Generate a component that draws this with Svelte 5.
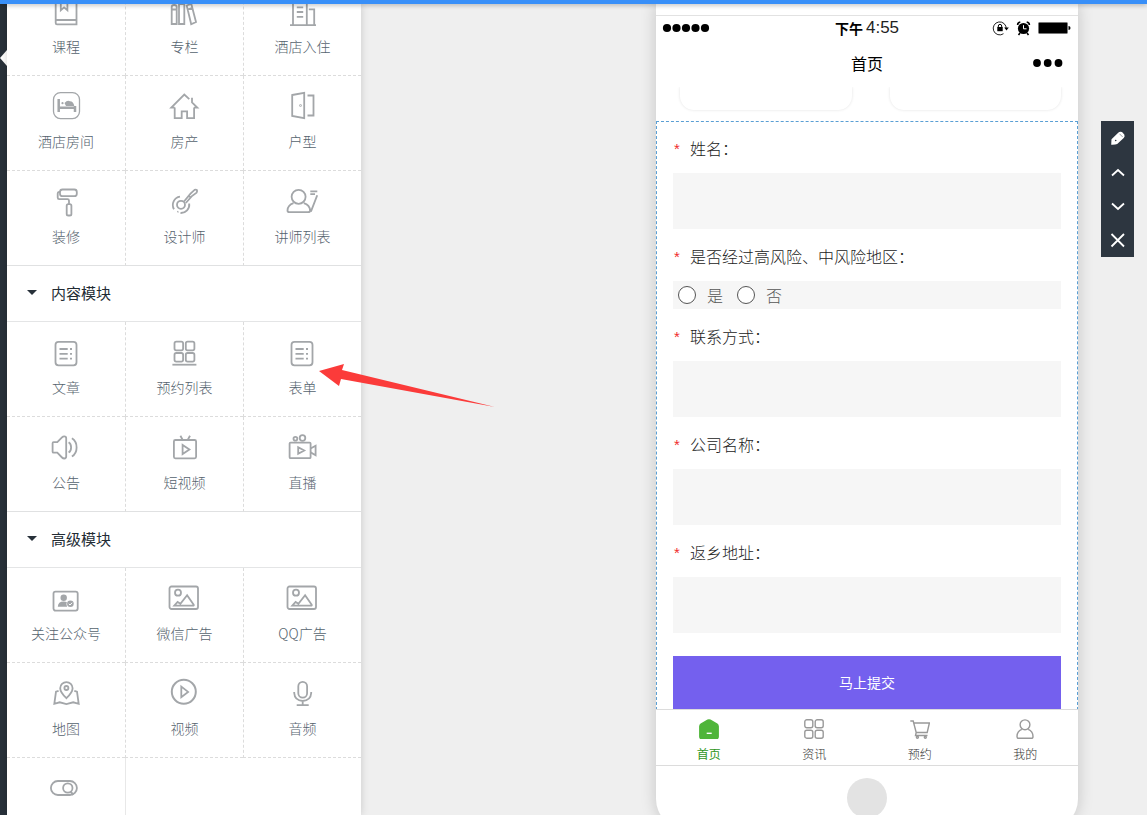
<script>
  const picture = '<rect x="1.5" y="4.5" width="28.5" height="22.5" rx="2"/><circle cx="10" cy="10.7" r="3"/><path d="M6.3 23.7 9.6 20l2.8 1.8 6.7-8.6 6.6 9.6q.5.9-.8.9z"/>';
  const sheet = '<rect x="5.5" y="5.8" width="21" height="23.5" rx="3"/><path d="M9.5 13h8.2M9.5 17.8h8.2M9.5 22.6h8.2M20 13h2M20 17.8h2M20 22.6h2"/>';

  const icons = {
    course: '<path d="M5.7 4h20.8v25.4H7q-1.3 0-1.3-1.3zM5.7 25h20.8M10.8 4v11.2l3.3-2.8 3.3 2.8V4"/>',
    books: '<path d="M3.7 12q0-2 2.5-2t2.5 2v17h-5zM3.7 14.5h5M11 5h5.3v24H11zM11 9h5.3M18.7 10.5l4.6-1.6L28 27.1l-4.8 2.1zM19.6 14.6l4.8-1.7"/>',
    hotel: '<path d="M4 30.2h26M7 30V4h13.8v26M22.8 14.3h5.4V30M10.8 12.4h6.4M10.8 17h6.4M10.8 21.8h6.4"/>',
    bed: '<rect x="3.5" y="2.6" width="26" height="26" rx="7" stroke-width="1.3"/><path d="M8.7 9v13M9 17.8h16M25 16v6" stroke-width="2.5"/><circle cx="12.5" cy="13.2" r="1.1" fill="currentColor" stroke="none"/><path d="M14.5 13q3-3.4 5.5-1.7 3.4.2 4.3 4.7H16z" fill="currentColor" stroke="none"/>',
    house: '<path d="M6.7 17.6H3.3L16.3 4.6l5 4.6M26 17.6h3.3L24 12.4V7.8M6.7 17.6v10.6h7v-6.8h5.4v6.8h7V17.6"/>',
    door: '<path d="m6.2 5 12-2.2v25.4L6.2 26zM21.5 5.5h6v20h-6"/><circle cx="14.5" cy="15.5" r=".4"/>',
    roller: '<rect x="10" y="4.5" width="16.8" height="6.7" rx="2.5"/><path d="M10 7H9q-1.3 0-1.3 1.6v4q0 1.6 1.5 1.6h8.3q1.5 0 1.5 1.5V19"/><rect x="16.7" y="19.2" width="4.7" height="11.3" rx="1.6"/>',
    designer: '<circle cx="13" cy="19.8" r="4"/><path d="M12 11.7a8.4 8.4 0 0 0-6 12.6M9.4 27l1-.5M21.2 18.5A8.4 8.4 0 0 1 12.5 28M16 16.5l6.5-7.8 4-3.8q1.5-.6 2.5.2.3 1.4-.4 2.5l-5 3.7-5.8 6.7M20.7 10.8l2.2 2"/>',
    teacher: '<circle cx="12.6" cy="11.8" r="7"/><path d="M7.5 18.2q-5.8 2-6 7.3 0 1.7 2 1.7h18.6q2 0 2-1.7-.3-5.3-6.3-7.3M24.3 6.3h7M24.3 9.1h4.7M31.2 10.3l-6.3 16.3"/>',
    sheet,
    appointment: '<rect x="6.5" y="5.7" width="8.6" height="8.6" rx="1.8"/><rect x="17.8" y="5.7" width="8.6" height="8.6" rx="1.8"/><rect x="6.5" y="17" width="8.6" height="8.6" rx="1.8"/><rect x="17.8" y="17" width="8.6" height="8.6" rx="1.8"/><path d="M4.4 28.7h24"/>',
    notice: '<path d="M2.6 12.2q0-1 1-1h3.7L12 6.4q1-1 2.3-1 1.9 0 1.9 1.9v18.3q0 1.9-1.9 1.9-1.3 0-2.3-1l-4.7-4.8H3.6q-1 0-1-1zM18.6 11.2q2.5 1.5 2.5 5.2t-2.5 5.2M21.9 7.3q4.7 3 4.7 9.1t-4.7 9.1"/>',
    tv: '<rect x="5.9" y="9" width="22.2" height="18.3" rx="1.5"/><path d="m12.4 4.8 2.2 4M22 4.8l-2.2 4M14.6 14v9l6.8-4.5z"/>',
    camera: '<rect x="3.6" y="11.6" width="21" height="15.6" rx="1"/><circle cx="9.4" cy="7.8" r="1.9"/><circle cx="16.5" cy="7" r="2.8"/><path d="M12.2 16.3v6.4l6-3.2zM24.6 17.5l5-2.8v9.5l-5-2.8"/>',
    follow: '<rect x="3.5" y="9.6" width="24.2" height="19" rx="2"/><g fill="currentColor" stroke="none"><circle cx="13.7" cy="15.8" r="3.2"/><path d="M7.8 24.8q.2-5.2 5.9-5.2 2 0 3.2.6-1.4 2.2.2 4.6z"/><circle cx="20.4" cy="21.8" r="3.3"/></g><path d="m18.8 21.8 1.2 1.2 2.1-2.2" stroke="#fff" stroke-width="1"/>',
    picture,
    map: '<path d="M16.4 21.2q-6.2-6-6.2-10a6.2 6 0 0 1 12.4 0q0 4-6.2 10zM8.6 13.8l-2.6.8-1.7 12.2 5.4-1.5 6.7 1.8 6.8-1.8 5.5 1.5L27 14.6l-2.7-.8"/><circle cx="16.4" cy="11" r="2"/>',
    video: '<circle cx="15.8" cy="14.7" r="12" stroke-width="2"/><path d="M13.3 9.6v10.6l6.8-5.3z"/>',
    mic: '<rect x="12.3" y="4.8" width="8.8" height="15.8" rx="4.4"/><path d="M8.2 15v1q.5 7.6 8.5 8 8-.4 8.5-8v-1M16.7 24v4M10.7 28.2h12"/>',
    search: '<rect x=".9" y="9" width="26" height="14" rx="7"/><circle cx="17.8" cy="16" r="4.7"/><path d="m20.7 19.6 2.6 3.2" stroke-width="2"/>',
    home: '<path d="M8.8 1.2 2 5.2Q.8 6 .8 7.4v10q0 2.6 2.6 2.6h13.2q2.6 0 2.6-2.6v-10q0-1.4-1.2-2.2l-6.8-4q-1.2-.7-2.4 0z" fill="currentColor"/><path d="M7.7 14.3h5" stroke="#fff"/>',
    grid: '<rect x=".8" y=".8" width="8" height="8" rx="2"/><rect x="11.2" y=".8" width="8" height="8" rx="2"/><rect x=".8" y="11.2" width="8" height="8" rx="2"/><rect x="11.2" y="11.2" width="8" height="8" rx="2"/>',
    cart: '<path d="M.3 2h2.9l3 11.5h11L19.4 4H3.8M6.2 13.5l-.7 3h12"/><circle cx="7.4" cy="18.3" r="1"/><circle cx="15.3" cy="18.3" r="1"/>',
    user: '<circle cx="10" cy="5.8" r="4.9"/><path d="M6.8 10.3Q2 12.3 2 17.4q0 1.9 1.8 1.9h12.4q1.8 0 1.8-1.9 0-5.1-4.8-7.1"/>',
  };

  const sections = [
    {
      items: [
        ['course', '课程'], ['books', '专栏'], ['hotel', '酒店入住'],
        ['bed', '酒店房间'], ['house', '房产'], ['door', '户型'],
        ['roller', '装修'], ['designer', '设计师'], ['teacher', '讲师列表'],
      ],
    },
    {
      title: '内容模块',
      items: [
        ['sheet', '文章'], ['appointment', '预约列表'], ['sheet', '表单'],
        ['notice', '公告'], ['tv', '短视频'], ['camera', '直播'],
      ],
    },
    {
      title: '高级模块',
      items: [
        ['follow', '关注公众号'], ['picture', '微信广告'], ['picture', 'QQ广告'],
        ['map', '地图'], ['video', '视频'], ['mic', '音频'],
        ['search', ''],
      ],
    },
  ];

  const fields = [
    { id: 'name', label: '姓名' },
    { id: 'risk', label: '是否经过高风险、中风险地区', options: ['是', '否'] },
    { id: 'contact', label: '联系方式' },
    { id: 'company', label: '公司名称' },
    { id: 'address', label: '返乡地址' },
  ];

  const tabs = [['home', '首页'], ['grid', '资讯'], ['cart', '预约'], ['user', '我的']];

  const tools = [
    { name: 'edit' },
    { name: 'up', d: 'M2 11.5 8 6l6 5.5' },
    { name: 'down', d: 'M2 5.5 8 11l6-5.5' },
    { name: 'remove', d: 'm1.500 2 12.500 12.500M14 2 1.500 14.500' },
  ];

  let active = $state('首页');
</script>

<div class="editor">
  <div class="topbar"></div>

  <div class="main">
    <div class="rail"><span class="rail-mark"></span></div>

    <aside class="panel">
      <div class="scrolled">
        {#each sections as section}
          <section>
            {#if section.title}
              <h2><span class="caret"></span>{section.title}</h2>
            {/if}
            <div class="modules">
              {#each section.items as [icon, label]}
                <button class="module" type="button" aria-label={label || icon}>
                  <svg width="32" height="32" viewBox="0 0 32 32">{@html icons[icon]}</svg>
                  {#if label}<span>{label}</span>{/if}
                </button>
              {/each}
            </div>
          </section>
        {/each}
      </div>
    </aside>

    <main class="canvas">
      <div class="phone">
        <div class="status">
          <svg class="signal" width="48" height="10" viewBox="0 0 48 10">
            {#each [0, 1, 2, 3, 4] as i}
              <circle cx={5 + i * 9.5} cy="5" r="4.1" />
            {/each}
          </svg>
          <div class="time"><b>下午</b><span>4:55</span></div>
          <svg class="indicators" width="80" height="16" viewBox="0 0 80 16">
            <path d="M11.5 13.7A6.5 6.5 0 1 1 14.2 9" fill="none" stroke="#222" />
            <path d="M12.2 7.6h4.6l-2.3 3z" />
            <rect x="5.3" y="7" width="5.4" height="4.2" />
            <path d="M6.3 7.5V6q0-1.6 1.7-1.6T9.7 6v1.5" fill="none" stroke="#000" />
            <circle cx="31.5" cy="8.5" r="5.6" />
            <path d="M25.6 5q0-2.5 2.7-3M37.4 5q0-2.5-2.7-3M28 13l-1.5 2M35 13l1.5 2" fill="none" stroke="#000" stroke-width="1.6" />
            <path d="M31.5 5.2v3.6h3" fill="none" stroke="#fff" />
            <rect x="46.5" y="2.5" width="29" height="11" rx="1" stroke="#777" />
            <path d="M76.5 6q2 0 2 2t-2 2z" />
          </svg>
        </div>
        <div class="navbar">
          <span class="title">首页</span>
          <button class="more" type="button" aria-label="more">
            <svg width="32" height="10" viewBox="0 0 32 10">
              <circle cx="5" cy="5" r="3.9" /><circle cx="15.7" cy="5" r="3.9" /><circle cx="26.5" cy="5" r="3.9" />
            </svg>
          </button>
        </div>

        <div class="screen">
          <div class="cards"><div class="card"></div><div class="card"></div></div>
          <form class="form" onsubmit={(e) => e.preventDefault()}>
            {#each fields as field}
              {#if field.options}
                <fieldset>
                  <legend class="label"><i>*</i>{field.label}：</legend>
                  <div class="options">
                    {#each field.options as option}
                      <label><input type="radio" name={field.id} value={option} />{option}</label>
                    {/each}
                  </div>
                </fieldset>
              {:else}
                <label class="label" for={field.id}><i>*</i>{field.label}：</label>
                <input class="text" id={field.id} type="text" />
              {/if}
            {/each}
            <button class="submit" type="submit">马上提交</button>
          </form>
        </div>

        <nav class="tabs">
          {#each tabs as [icon, label]}
            <button type="button" class="tab" class:active={active === label} onclick={() => (active = label)}>
              <svg width="20" height="20" viewBox="0 0 20 20">{@html icons[icon]}</svg>
              <span>{label}</span>
            </button>
          {/each}
        </nav>
        <div class="chin"><span class="home-key"></span></div>
      </div>

      <div class="tools">
        {#each tools as tool}
          <button type="button" aria-label={tool.name}>
            <svg width="16" height="16" viewBox="0 0 16 16">
              {#if tool.d}
                <path d={tool.d} fill="none" stroke="#fff" stroke-width="1.8" />
              {:else}
                <path d="M1.2 14.8 1.5 9.3 8.2 2.7q1.5-1.5 3.8-.6l2.3 2.3q.9 2-.6 3.600L7.2 14q-2 1-6 .8z" fill="#fff" />
                <path d="m9.5 3.8 3.2 3.2" stroke="#2d3640" stroke-width=".5" />
                <circle cx="5.7" cy="10.5" r=".8" fill="#2d3640" />
              {/if}
            </svg>
          </button>
        {/each}
      </div>
    </main>
  </div>

  <svg class="arrow" width="178" height="46" viewBox="0 0 178 46">
    <path d="M1 8 26 1l-2 6 153 37L23 16l-2 7z" fill="#fb3b3a" />
  </svg>
</div>

<style>
  :global(body) {
    overflow: hidden;
    font-family: "Noto Sans CJK SC", "Noto Sans", sans-serif;
    font-weight: 300;
  }

  .editor, .editor * { box-sizing: border-box; }

  .editor {
    position: relative;
    display: flex;
    flex-direction: column;
    height: 100vh;
    overflow: hidden;
    background: #efefef;
  }

  button {
    font: inherit;
    border: none;
    padding: 0;
    background: none;
    cursor: pointer;
  }

  .topbar {
    flex: none;
    height: 4px;
    background: #388ff8;
    box-shadow: 0 1px 5px rgba(0, 0, 0, 0.3);
    z-index: 2;
  }

  .main {
    display: flex;
    flex: 1;
    min-height: 0;
  }

  .rail {
    flex: none;
    width: 7px;
    padding-top: 46px;
    background: #28313a;
  }

  .rail-mark {
    display: block;
    border: solid transparent;
    border-width: 8px 7px 8px 0;
    border-right-color: #fff;
  }

  .panel {
    flex: none;
    width: 354px;
    overflow: hidden;
    background: #fff;
    box-shadow: 0 0 8px rgba(0, 0, 0, 0.16);
  }

  .scrolled { margin-top: -23px; }

  h2 {
    display: flex;
    align-items: center;
    gap: 14px;
    height: 56px;
    margin: 0;
    padding: 0 0 2px 20px;
    border-bottom: 1px solid #e4e5e6;
    color: #222b33;
    font-size: 15px;
    font-weight: 400;
  }

  .caret {
    border: solid transparent;
    border-width: 5px 5px 0;
    border-top-color: #28313a;
  }

  .modules {
    display: grid;
    grid-template-columns: repeat(3, 1fr);
    grid-auto-rows: 95px;
  }

  .module {
    display: flex;
    flex-direction: column;
    align-items: center;
    gap: 9px;
    padding-top: 14px;
    border-bottom: 1px dashed #dcdcdc;
    color: #55636e;
    font-size: 14px;
    line-height: 20px;
  }

  .module:not(:nth-child(3n + 1)) { border-left: 1px dashed #dcdcdc; }
  .module:not(:nth-child(3n + 1)) svg { margin-right: 2px; }

  /* the trailing module closes its row on the right */
  .module:last-child:nth-child(3n + 1) { box-shadow: 1px 0 #e8e8e8; }

  section:not(:last-child) .module:nth-last-child(-n + 3) {
    border-bottom: 1px solid #e0e1e2;
  }

  .module svg {
    color: #a3a6a9;
    fill: none;
    stroke: currentColor;
    stroke-width: 1.8;
  }

  .canvas {
    display: flex;
    flex: 1;
    align-items: flex-start;
    justify-content: flex-end;
    gap: 23px;
    padding-right: 13px;
  }

  .phone {
    flex: none;
    width: 422px;
    padding-top: 11px;
    border-radius: 0 0 30px 30px;
    background: #fff;
    box-shadow: 0 0 16px rgba(0, 0, 0, 0.18);
  }

  .status {
    display: grid;
    grid-template-columns: 1fr auto 1fr;
    align-items: center;
    height: 26px;
    padding: 0 6px 2px;
    border-top: 1px solid #e2e2e2;
    color: #000;
  }

  .time {
    display: flex;
    align-items: center;
    gap: 3px;
    line-height: 20px;
  }

  .time b {
    font-size: 14px;
    font-weight: 700;
  }

  .time span {
    font-family: "Liberation Sans", sans-serif;
    font-size: 17px;
    font-weight: 400;
    color: #222;
  }

  .indicators { justify-self: end; }

  .navbar {
    display: grid;
    grid-template-columns: 1fr auto 1fr;
    align-items: center;
    height: 46px;
    padding: 0 14px 2px;
  }

  .title {
    grid-column: 2;
    color: #000;
    font-size: 16px;
    font-weight: 400;
  }

  .more {
    display: flex;
    justify-self: end;
  }

  .screen {
    height: 622px;
    overflow: hidden;
  }

  .cards {
    display: flex;
    gap: 38px;
    height: 34px;
    padding: 0 17px 11px 24px;
  }

  .card {
    flex: 1;
    border-radius: 0 0 14px 14px;
    box-shadow: 0 0 3px rgba(0, 0, 0, 0.12);
  }

  .form {
    padding: 0 17px 16px;
    outline: 1px dashed #5a9fd4;
    outline-offset: -1px;
  }

  fieldset {
    min-width: 0;
    margin: 0;
    padding: 0;
    border: none;
  }

  .label {
    display: flex;
    padding: 15px 0 13px;
    color: #222;
    font-size: 16px;
    line-height: 24px;
  }

  .label i {
    width: 17px;
    padding: 3px 0 0 1px;
    color: #f02c2c;
    font-family: "Liberation Sans", sans-serif;
    font-size: 15px;
    font-style: normal;
    line-height: 20px;
  }

  .text {
    display: block;
    width: 100%;
    height: 56px;
    padding: 0 12px;
    border: none;
    background: #f6f6f6;
    font: inherit;
  }

  .options {
    display: flex;
    gap: 14px;
    height: 28px;
    padding-left: 5px;
    background: #f6f6f6;
    color: #555;
    font-size: 16px;
    line-height: 24px;
  }

  .options label {
    display: flex;
    align-items: center;
    gap: 11px;
  }

  .options input {
    appearance: none;
    width: 18px;
    height: 18px;
    margin: 0;
    border: 1px solid #555;
    border-radius: 50%;
    background: #fff;
  }

  .options input:checked { border: 5px solid #7460ee; }

  .submit {
    display: block;
    width: 100%;
    height: 53px;
    margin-top: 23px;
    padding-bottom: 2px;
    background: #7460ee;
    color: #fff;
    font-size: 14px;
    font-weight: 400;
  }

  .tabs {
    display: flex;
    height: 57px;
    border: solid #dcdcdc;
    border-width: 1px 0;
  }

  .tab {
    display: flex;
    flex: 1;
    flex-direction: column;
    align-items: center;
    gap: 6px;
    padding-top: 9px;
    color: #333;
    font-size: 12px;
    line-height: 18px;
  }

  .tab svg {
    color: #999;
    fill: none;
    stroke: currentColor;
    stroke-width: 1.4;
  }

  .tab.active svg { color: #4fb53a; }

  .tab.active span {
    color: #30961c;
    font-weight: 400;
  }

  .chin {
    display: flex;
    align-items: center;
    justify-content: center;
    height: 63px;
  }

  .home-key {
    width: 40px;
    height: 40px;
    border-radius: 50%;
    background: #e3e3e3;
  }

  .tools {
    display: flex;
    flex: none;
    flex-direction: column;
    width: 33px;
    margin-top: 117px;
    background: #2d3640;
  }

  .tools button {
    display: flex;
    align-items: center;
    justify-content: center;
    height: 34px;
  }

  .arrow {
    position: absolute;
    top: 363px;
    left: 318px;
    z-index: 3;
    pointer-events: none;
  }
</style>
